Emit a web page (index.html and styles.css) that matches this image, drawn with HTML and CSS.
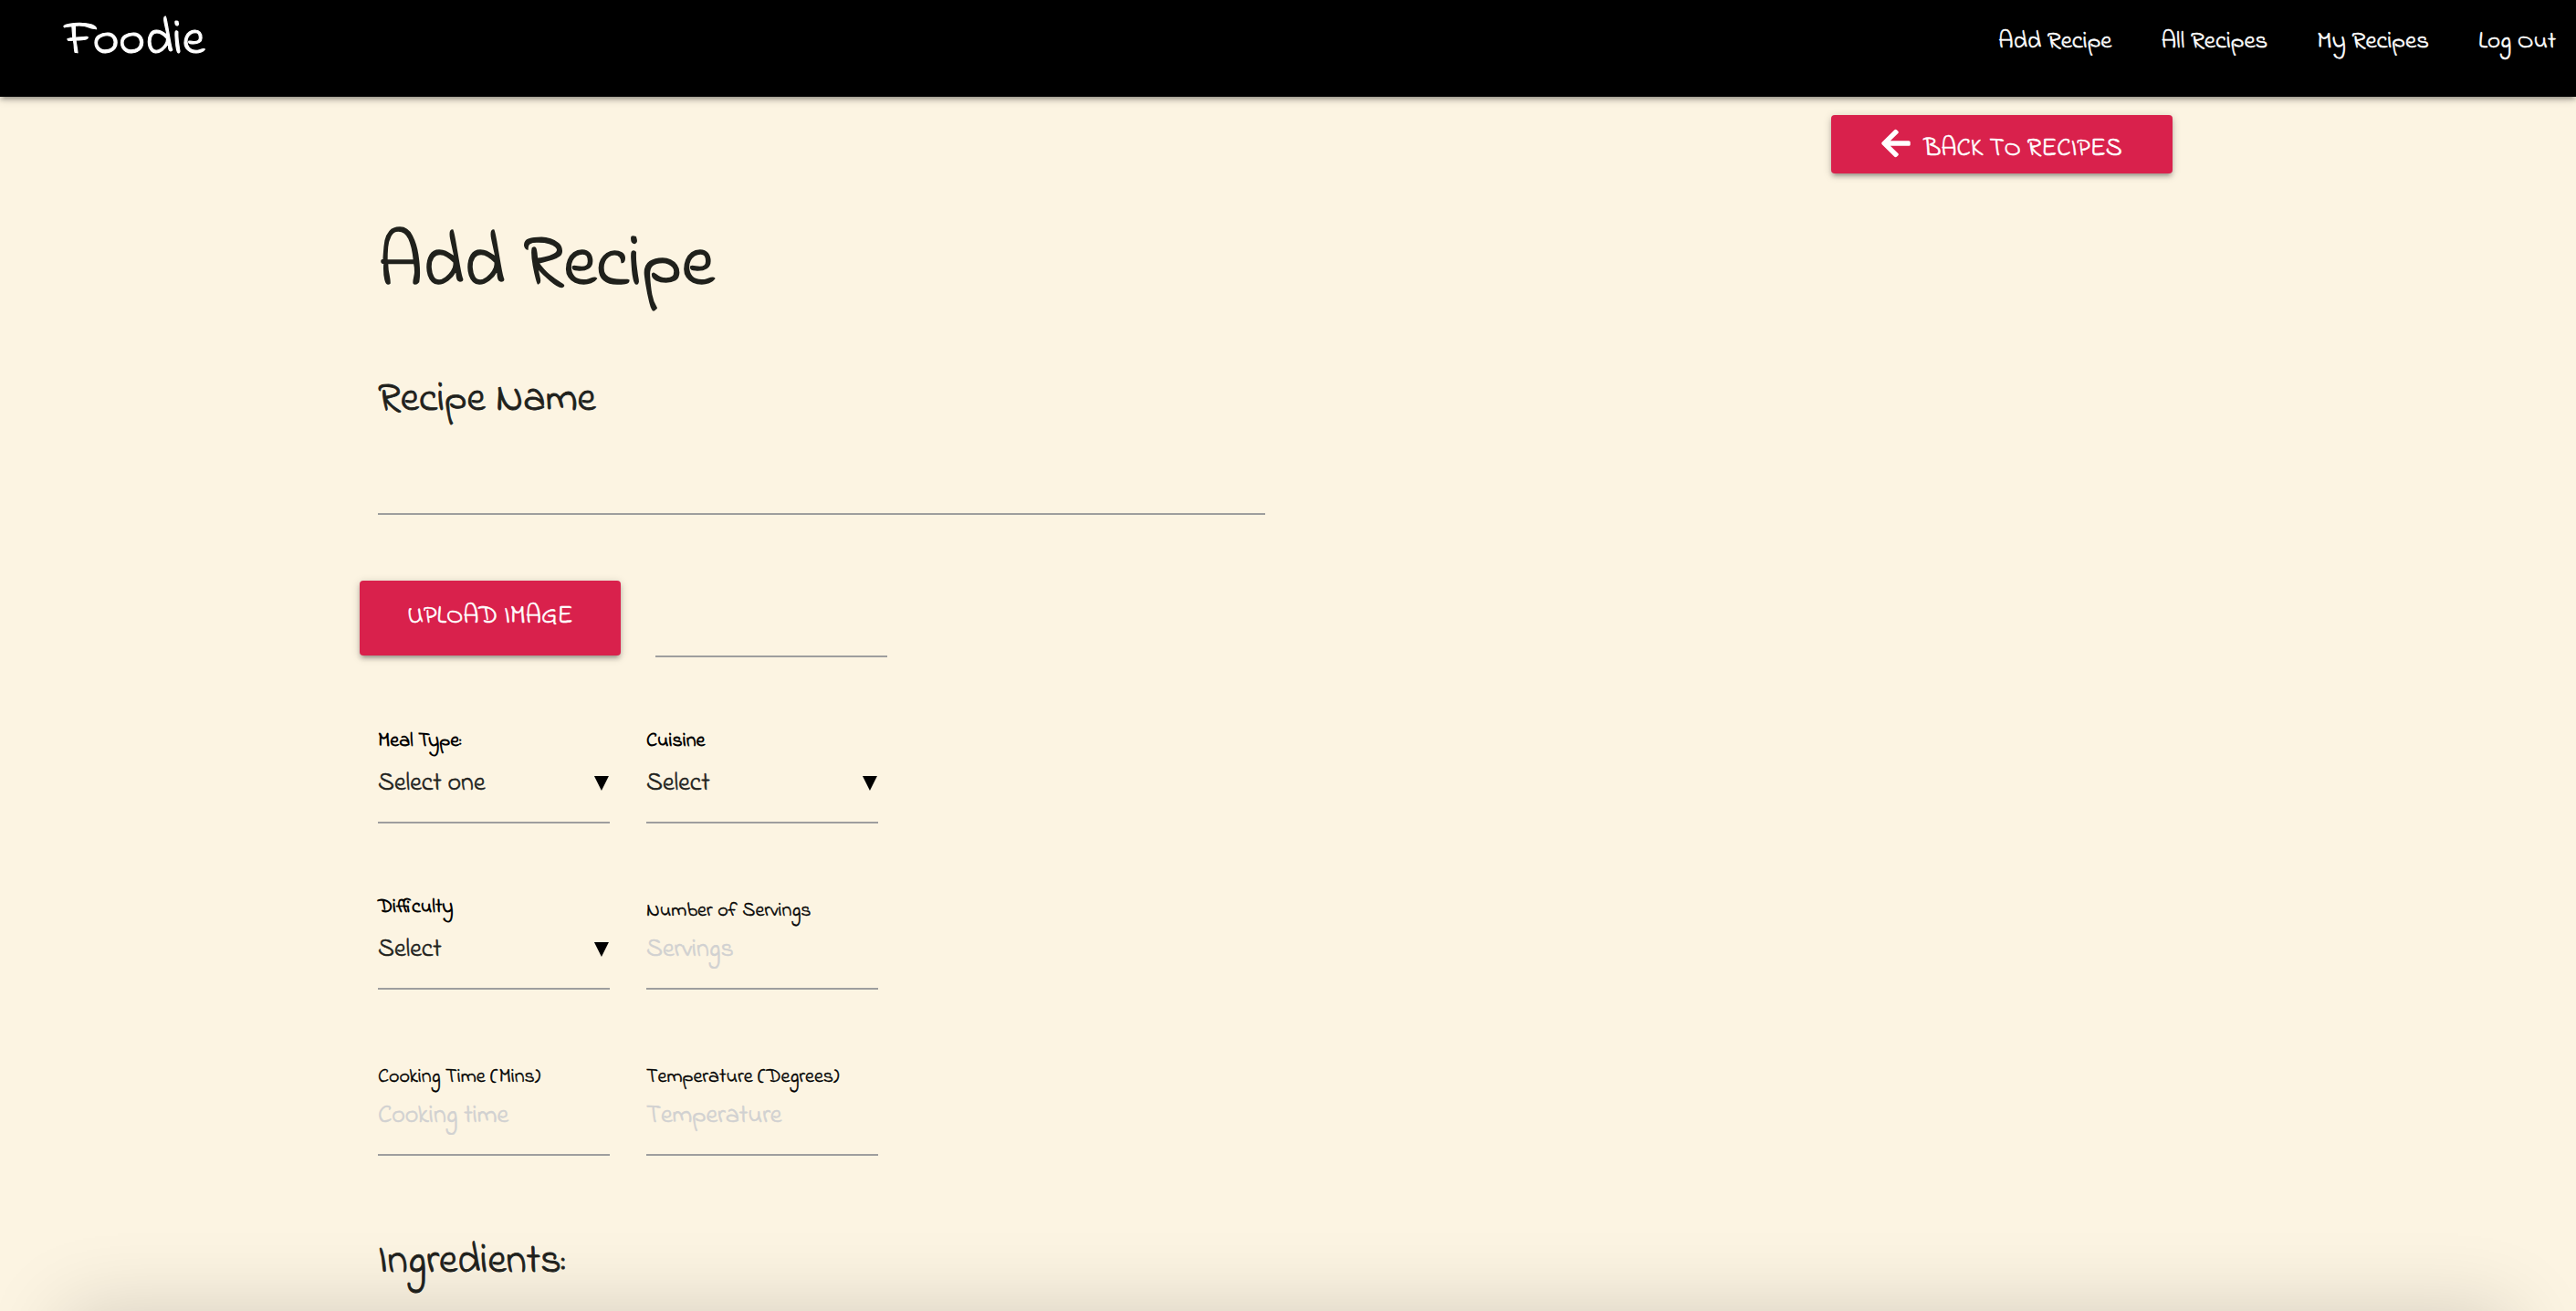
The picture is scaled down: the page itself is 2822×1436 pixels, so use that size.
FILE: index.html
```html
<!DOCTYPE html>
<html lang="en">
<head>
<meta charset="utf-8">
<meta name="viewport" content="width=device-width, initial-scale=1">
<title>Foodie - Add Recipe</title>
<link rel="stylesheet" href="styles.css">
</head>
<body>
<nav class="navbar">
  <a class="brand" href="#">Foodie</a>
  <ul class="nav-links">
    <li><a href="#">Add Recipe</a></li>
    <li><a href="#">All Recipes</a></li>
    <li><a href="#">My Recipes</a></li>
    <li><a href="#">Log Out</a></li>
  </ul>
</nav>
<main class="page">
  <div class="toolbar">
    <a class="btn btn-back" href="#">
      <svg class="icon" viewBox="0 0 448 512" aria-hidden="true"><path fill="currentColor" d="M257.500 445.100l-22.200 22.200c-9.400 9.400-24.600 9.400-33.900 0L7 273c-9.400-9.400-9.400-24.600 0-33.900L201.400 44.700c9.400-9.400 24.600-9.400 33.900 0l22.200 22.200c9.500 9.500 9.300 25-.4 34.300L136.600 216H424c13.300 0 24 10.700 24 24v32c0 13.300-10.700 24-24 24H136.600l120.500 114.800c9.800 9.300 10 24.800.4 34.300z"/></svg>
      <span>Back to recipes</span>
    </a>
  </div>
  <form class="recipe-form">
    <h1 class="title">Add Recipe</h1>
    <label class="heading" for="name">Recipe Name</label>
    <input class="line-input name-input" id="name" type="text">
    <div class="upload">
      <button class="btn btn-upload" type="button">Upload image</button>
      <input class="line-input upload-path" type="text" aria-label="Image file">
    </div>
    <div class="fields">
      <div class="field">
        <label class="label label-strong" for="meal">Meal Type:</label>
        <div class="select-wrap"><select class="line-input" id="meal"><option>Select one</option></select></div>
      </div>
      <div class="field">
        <label class="label label-strong" for="cuisine">Cuisine</label>
        <div class="select-wrap"><select class="line-input" id="cuisine"><option>Select</option></select></div>
      </div>
      <div class="field">
        <label class="label label-strong" for="difficulty">Difficulty</label>
        <div class="select-wrap"><select class="line-input" id="difficulty"><option>Select</option></select></div>
      </div>
      <div class="field">
        <label class="label" for="servings">Number of Servings</label>
        <input class="line-input" id="servings" type="text" placeholder="Servings">
      </div>
      <div class="field">
        <label class="label" for="time">Cooking Time (Mins)</label>
        <input class="line-input" id="time" type="text" placeholder="Cooking time">
      </div>
      <div class="field">
        <label class="label" for="temperature">Temperature (Degrees)</label>
        <input class="line-input" id="temperature" type="text" placeholder="Temperature">
      </div>
    </div>
    <h2 class="heading">Ingredients:</h2>
  </form>
</main>
<div class="sheet"></div>
</body>
</html>
```

FILE: styles.css
```css
* {
  box-sizing: border-box;
  -webkit-text-stroke: .02em;
}

body {
  margin: 0;
  background: #fcf4e2;
  color: #20211c;
  font-family: "Indie Flower", Lato, sans-serif;
  font-size: 28px;
}

.navbar {
  display: flex;
  justify-content: space-between;
  height: 106px;
  padding: 0 22px 0 71px;
  background: #000;
  box-shadow: 0 4px 4px rgba(0, 0, 0, .14), 0 6px 2px -4px rgba(0, 0, 0, .12), 0 2px 10px rgba(0, 0, 0, .2);
}

.brand {
  color: #fff;
  font-size: 55px;
  line-height: 90px;
  text-decoration: none;
}

.nav-links {
  display: flex;
  gap: 54px;
  margin: 0;
  padding: 0;
  list-style: none;
  font-size: 27px;
  line-height: 92px;
}

.nav-links a {
  color: #fff;
  text-decoration: none;
}

.page {
  padding: 20px 13.96% 28px;
}

.toolbar {
  display: flex;
  justify-content: flex-end;
  padding-right: 48px;
}

.btn {
  border: 0;
  border-radius: 4px;
  background: #d9214c;
  color: #fff;
  font-family: inherit;
  font-size: 28px;
  text-decoration: none;
  text-transform: uppercase;
  white-space: nowrap;
  box-shadow: 0 4px 4px rgba(0, 0, 0, .14), 0 6px 2px -4px rgba(0, 0, 0, .12), 0 2px 10px rgba(0, 0, 0, .2);
}

.btn-back {
  display: flex;
  align-items: center;
  justify-content: center;
  gap: 14px;
  width: 374px;
  height: 64px;
  padding-top: 10px;
}

.icon {
  width: 32px;
  height: 36px;
  margin-bottom: 12px;
}

.recipe-form {
  width: 50%;
  padding: 0 25px 0 20px;
}

.title {
  margin: 56px 0 74px;
  font-size: 80px;
  font-weight: 400;
  line-height: 92px;
}

.heading {
  display: block;
  margin: 0;
  font-size: 45px;
  font-weight: 400;
  line-height: 52px;
}

.line-input {
  display: block;
  width: 100%;
  height: 90px;
  padding: 0;
  border: 0;
  border-bottom: 2px solid #9e9e9e;
  border-radius: 0;
  outline: 0;
  appearance: none;
  background: transparent;
  color: inherit;
  font-family: inherit;
  font-size: 28px;
}

.line-input::placeholder {
  color: #d1d1d1;
  opacity: 1;
}

.name-input {
  margin-top: 10px;
}

.upload {
  display: flex;
  align-items: flex-start;
  gap: 38px;
  margin: 72px 0 0 -20px;
}

.btn-upload {
  width: 286px;
  height: 82px;
  padding-bottom: 4px;
}

.upload-path {
  width: 254px;
  height: 84px;
}

.fields {
  display: grid;
  grid-template-columns: 254px 254px;
  column-gap: 40px;
  padding-bottom: 90px;
}

.field {
  display: flex;
  flex-direction: column;
  justify-content: flex-end;
  height: 182px;
}

.label {
  color: #000;
  font-size: 22px;
  line-height: 24px;
}

.label-strong {
  font-weight: 700;
  margin-bottom: 4px;
  -webkit-text-stroke: 0;
}

.field .line-input {
  height: 74px;
  padding-bottom: 12px;
}

.select-wrap {
  display: grid;
  align-items: start;
}

.select-wrap > *,
.select-wrap::after {
  grid-area: 1 / 1;
}

.select-wrap::after {
  content: "";
  justify-self: end;
  width: 16px;
  height: 16px;
  margin: 22px 1px 0 0;
  background: #000;
  clip-path: polygon(0 0, 100% 0, 50% 100%);
  pointer-events: none;
}

.sheet {
  position: fixed;
  top: 100%;
  right: 70px;
  left: 70px;
  height: 400px;
  box-shadow: 0 0 84px rgba(0, 0, 0, .16);
}
```
